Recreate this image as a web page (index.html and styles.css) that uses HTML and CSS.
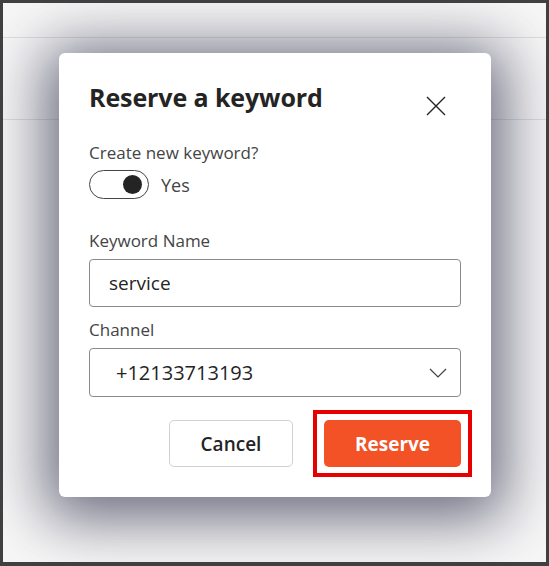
FILE: index.html
```html
<!DOCTYPE html>
<html lang="en">
  <head>
    <meta charset="UTF-8" />
    <meta name="viewport" content="width=device-width, initial-scale=1.0" />
    <title>Reserve a keyword</title>
    <link rel="stylesheet" href="styles.css">
  </head>
  <body>
    <div class="frame">
      <div class="page-top"></div>
      <div class="page-bar"></div>
      <div class="page-body"></div>

      <div class="dialog">
        <div class="dialog-head">
          <h2>Reserve a keyword</h2>
          <button class="close" aria-label="Close">
            <svg width="20" height="20" viewBox="0 0 20 20">
              <path d="M1 1 L19 19 M19 1 L1 19" stroke="#242424" stroke-width="1.4" fill="none" />
            </svg>
          </button>
        </div>

        <div class="field">
          <span class="label">Create new keyword?</span>
          <div class="toggle-row">
            <span class="toggle"><span class="knob"></span></span>
            <span class="toggle-text">Yes</span>
          </div>
        </div>

        <div class="field">
          <label class="label" for="kw">Keyword Name</label>
          <input id="kw" class="input" type="text" value="service" />
        </div>

        <div class="field">
          <span class="label">Channel</span>
          <div class="select">
            <span>+12133713193</span>
            <svg width="18" height="10" viewBox="0 0 18 10">
              <path d="M1 1 L9 9 L17 1" stroke="#424242" stroke-width="1.2" fill="none" />
            </svg>
          </div>
        </div>

        <div class="actions">
          <button class="btn btn-cancel">Cancel</button>
          <div class="highlight">
            <button class="btn btn-primary">Reserve</button>
          </div>
        </div>
      </div>
    </div>
  </body>
</html>
```

FILE: styles.css
```css
html,
body {
  margin: 0;
  padding: 0;
}
body {
  font-family: "Open Sans", "Noto Sans", sans-serif;
  color: #242424;
}
.frame {
  position: relative;
  box-sizing: border-box;
  width: 549px;
  height: 566px;
  border: 3px solid #404040;
  border-bottom-width: 4px;
  background: #f7f7f7;
  overflow: hidden;
}
.page-top {
  height: 34px;
  border-bottom: 1px solid #dedede;
}
.page-bar {
  height: 81px;
  border-bottom: 1px solid #dedede;
}
.dialog {
  position: absolute;
  left: 56px;
  top: 50px;
  width: 432px;
  height: 444px;
  box-sizing: border-box;
  padding: 26px 30px 0 30px;
  background: #fff;
  border-radius: 6px;
  box-shadow: 0 8px 60px 14px rgba(60, 60, 85, 0.75);
}
.dialog-head {
  display: flex;
  justify-content: space-between;
  align-items: flex-start;
  margin-bottom: 25px;
}
.dialog-head h2 {
  margin: 0;
  font-size: 25px;
  font-weight: 700;
  line-height: 36px;
  letter-spacing: -0.1px;
}
.close {
  margin: 17px 15px 0 0;
  padding: 0;
  border: none;
  background: none;
  width: 20px;
  height: 20px;
}
.field {
  display: flex;
  flex-direction: column;
  margin-bottom: 11px;
}
.label {
  font-size: 17px;
  line-height: 24px;
  color: #444;
  margin-bottom: 6px;
}
.toggle-row {
  display: flex;
  align-items: center;
  gap: 12px;
  margin-top: -1px;
  margin-bottom: 19px;
}
.toggle {
  box-sizing: border-box;
  width: 60px;
  height: 29px;
  border: 1.5px solid #444;
  border-radius: 15px;
  display: flex;
  align-items: center;
  justify-content: flex-end;
  padding-right: 6px;
}
.knob {
  width: 19px;
  height: 19px;
  border-radius: 50%;
  background: #242424;
}
.toggle-text {
  font-size: 18px;
  color: #444;
}
.input,
.select {
  box-sizing: border-box;
  width: 372px;
  height: 48px;
  border: 1px solid #8a8a8a;
  border-radius: 4px;
  font-family: inherit;
  font-size: 19px;
  color: #242424;
}
.input {
  padding: 0 19px;
  outline: none;
}
.select {
  display: flex;
  align-items: center;
  justify-content: space-between;
  height: 49px;
  padding: 0 13px 0 26px;
  font-size: 20px;
}
.actions {
  display: flex;
  justify-content: flex-end;
  align-items: center;
  gap: 20px;
  margin-top: 13px;
  margin-right: -11px;
}
.btn {
  box-sizing: border-box;
  height: 47px;
  border-radius: 5px;
  font-family: inherit;
  font-size: 19px;
  font-weight: 600;
  cursor: pointer;
}
.btn-cancel {
  width: 124px;
  background: #fff;
  color: #242424;
  border: 1px solid #d1d1d1;
}
.btn-primary {
  width: 137px;
  background: #f25225;
  color: #fff;
  border: none;
  font-weight: 700;
}
.highlight {
  border: 4px solid #e60000;
  padding: 6px 7px;
  display: flex;
}
```
